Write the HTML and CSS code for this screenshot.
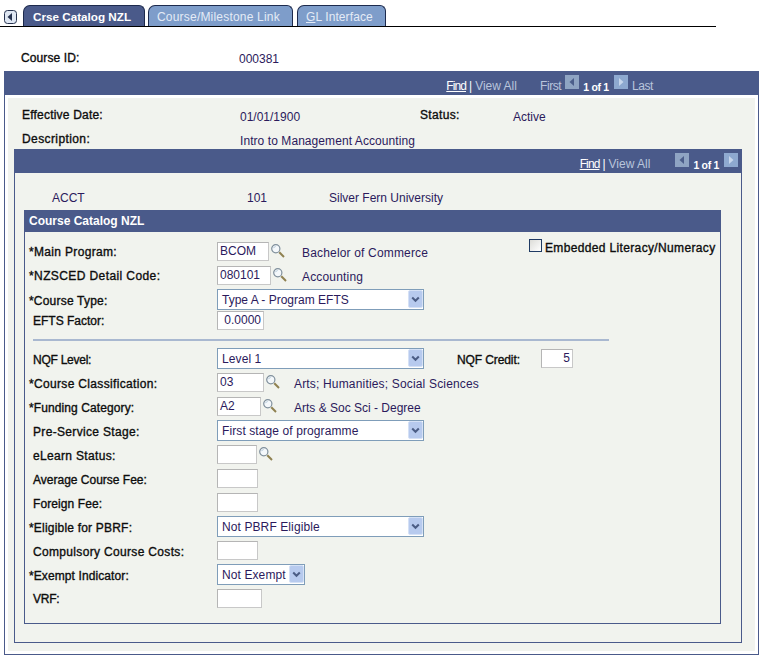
FILE: index.html
```html
<!DOCTYPE html>
<html lang="en">
<head>
<meta charset="utf-8">
<title>Crse Catalog NZL</title>
<link rel="stylesheet" href="styles.css">
</head>
<body>
<svg width="0" height="0" class="defs">
  <symbol id="mag" viewBox="0 0 14 14">
    <circle cx="4.800" cy="4.800" r="4.100" fill="#f4f8fb" stroke="#7f8f9c" stroke-width="1.200"/>
    <path d="M2.500 4.200a2.600 2.600 0 0 1 2.200-1.700" fill="none" stroke="#b6cbdc"/>
    <path d="M8.300 8.300 13 13" stroke="#8f8150" stroke-width="2"/>
  </symbol>
  <symbol id="drop" viewBox="0 0 15 18">
    <rect x=".5" y=".5" width="14" height="17" rx="1.500" fill="#b7caee" stroke="#d5e1f6"/>
    <path d="M4.200 7.500l3.300 3.300 3.300-3.300" fill="none" stroke="#4b5d85" stroke-width="2"/>
  </symbol>
  <symbol id="al" viewBox="0 0 14 14"><rect width="14" height="14" fill="#8fa4c3"/><path d="M9 3v8L4.500 7z" fill="#4c5e8b"/></symbol>
  <symbol id="ar" viewBox="0 0 14 14"><rect width="14" height="14" fill="#8ea9d0"/><path d="M5 3v8L9.500 7z" fill="#c7d6ec"/></symbol>
</svg>

<nav class="tabbar">
  <span class="collapse"><svg width="13" height="14" viewBox="0 0 13 14"><rect x=".5" y=".5" width="12" height="13" rx="3" fill="#dfe7f3" stroke="#26324f"/><path d="M8 3v8L3.500 7z" fill="#26324f"/></svg></span>
  <a class="tab active">Crse Catalog NZL</a>
  <a class="tab tab-mid">Course/Milestone Link</a>
  <a class="tab tab-last"><u>G</u>L Interface</a>
</nav>

<div class="course-id">
  <span class="label id-label t1">Course ID:</span>
  <span class="val">000381</span>
</div>

<section class="outer">
  <header class="bar">
    <a class="find">Find</a><span class="sep">|</span><span class="dim">View All</span>
    <span class="dim first">First</span>
    <svg class="arrow"><use href="#al"/></svg>
    <b class="count">1 of 1</b>
    <svg class="arrow"><use href="#ar"/></svg>
    <span class="dim last">Last</span>
  </header>
  <div class="outer-body">
    <div class="info-row first-info">
      <span class="label info-label t2">Effective Date:</span>
      <span class="val info-val">01/01/1900</span>
      <span class="label status-label t3">Status:</span>
      <span class="val">Active</span>
    </div>
    <div class="info-row second-info">
      <span class="label info-label t4">Description:</span>
      <span class="val info-val desc-text">Intro to Management Accounting</span>
    </div>

    <section class="inner">
      <header class="bar inner-bar">
        <a class="find">Find</a><span class="sep">|</span><span class="dim">View All</span>
        <svg class="arrow nav-first"><use href="#al"/></svg>
        <b class="count">1 of 1</b>
        <svg class="arrow"><use href="#ar"/></svg>
      </header>
      <div class="inner-body">
        <div class="key-row">
          <span class="val k1">ACCT</span>
          <span class="val k2">101</span>
          <span class="val">Silver Fern University</span>
        </div>
        <section class="catalog">
          <h2>Course Catalog NZL</h2>
          <div class="form">
            <span class="check"><i class="box"></i>Embedded Literacy/Numeracy</span>

            <div class="row"><label class="req t3 up">*Main Program:</label><span class="inp w52">BCOM</span><svg class="mag"><use href="#mag"/></svg><span class="val desc m17">Bachelor of Commerce</span></div>
            <div class="row"><label class="req t4 up">*NZSCED Detail Code:</label><span class="inp w54">080101</span><svg class="mag"><use href="#mag"/></svg><span class="val desc m15">Accounting</span></div>
            <div class="row"><label class="req t2">*Course Type:</label><span class="sel w207 tight">Type A - Program EFTS<svg class="dd"><use href="#drop"/></svg></span></div>
            <div class="row short"><label class="up">EFTS Factor:</label><span class="inp w47 right">0.0000</span></div>
            <hr class="rule">
            <div class="row"><label class="tn2">NQF Level:</label><span class="sel w207">Level 1<svg class="dd"><use href="#drop"/></svg></span><label class="credit tn1">NQF Credit:</label><span class="inp w32 right">5</span></div>
            <div class="row"><label class="req t3">*Course Classification:</label><span class="inp w47">03</span><svg class="mag"><use href="#mag"/></svg><span class="val desc m14">Arts; Humanities; Social Sciences</span></div>
            <div class="row"><label class="req t1">*Funding Category:</label><span class="inp w44">A2</span><svg class="mag"><use href="#mag"/></svg><span class="val desc m17 tight">Arts &amp; Soc Sci - Degree</span></div>
            <div class="row"><label class="t3">Pre-Service Stage:</label><span class="sel w207">First stage of programme<svg class="dd"><use href="#drop"/></svg></span></div>
            <div class="row"><label class="t3">eLearn Status:</label><span class="inp w40"></span><svg class="mag"><use href="#mag"/></svg></div>
            <div class="row"><label>Average Course Fee:</label><span class="inp w41"></span></div>
            <div class="row"><label class="t1">Foreign Fee:</label><span class="inp w41"></span></div>
            <div class="row"><label class="req t2">*Eligible for PBRF:</label><span class="sel w207">Not PBRF Eligible<svg class="dd"><use href="#drop"/></svg></span></div>
            <div class="row"><label class="t3">Compulsory Course Costs:</label><span class="inp w41"></span></div>
            <div class="row"><label class="req t1">*Exempt Indicator:</label><span class="sel w88">Not Exempt<svg class="dd"><use href="#drop"/></svg></span></div>
            <div class="row"><label class="tn2 up">VRF:</label><span class="inp w45"></span></div>
          </div>
        </section>
      </div>
    </section>
  </div>
</section>
</body>
</html>
```

FILE: styles.css
```css
* { box-sizing: border-box; }
html, body { margin: 0; padding: 0; background: #fff; }
body {
  width: 764px;
  height: 661px;
  overflow: hidden;
  font: 12px/14px "Liberation Sans", Arial, sans-serif;
  color: #000;
}
.defs { position: absolute; }

/* tabs */
.tabbar {
  display: flex;
  align-items: flex-end;
  width: 716px;
  height: 27px;
  padding: 5px 0 0 4px;
  border-bottom: 1px solid #000;
}
.collapse { display: flex; align-self: flex-start; margin: 5px 6px 0 0; }
.tab {
  display: flex;
  align-items: center;
  height: 21px;
  padding: 2px 0 0 8px;
  border: 1px solid #1d2a4d;
  border-bottom: 0;
  border-radius: 7px 6px 0 0;
  background: #7e9dca;
  color: #e4ebf6;
  white-space: nowrap;
}
.tab.active {
  width: 122px;
  margin-right: 3px;
  padding-left: 9px;
  background: #4a5a8a;
  color: #fff;
  font-size: 11.700px;
  font-weight: bold;
}
.tab-mid { width: 145px; margin-right: 4px; letter-spacing: .2px; }
.tab-last { width: 89px; letter-spacing: .1px; }

/* top line */
.course-id { display: flex; height: 44px; padding: 24px 0 0 21px; }
.id-label { width: 218px; }
.course-id .val { padding-top: 1px; }
.label, .row label, .check {
  color: #0d0d0d;
  -webkit-text-stroke: .35px #0d0d0d;
}
.t1 { letter-spacing: .1px; }
.t2 { letter-spacing: .2px; }
.t3 { letter-spacing: .33px; }
.t4 { letter-spacing: .4px; }
.tn1 { letter-spacing: -.1px; }
.tn2 { letter-spacing: -.25px; }
.val { color: #2b1a5c; }

/* outer level */
.outer {
  margin-left: 4px;
  width: 755px;
  height: 584px;
  border: 1px solid #4a5a8a;
  padding-bottom: 3px;
  display: flex;
  flex-direction: column;
}
.bar {
  display: flex;
  align-items: center;
  justify-content: flex-end;
  height: 23px;
  padding: 5px 105px 0 0;
  background: #4a5a8a;
  color: #fff;
  flex: none;
}
.inner-bar { padding-right: 3px; }
.find { color: #fff; text-decoration: underline; letter-spacing: -.9px; }
.sep { margin: 0 3px; }
.dim { color: #b9c5dc; }
.first { margin-left: 23px; margin-right: 4px; letter-spacing: -.4px; }
.last { margin-left: 4px; letter-spacing: -.4px; }
.arrow { width: 14px; height: 14px; margin-top: -8px; flex: none; }
.nav-first { margin-left: 25px; }
.count { margin: 2px 5px 0 4px; font-size: 10.500px; letter-spacing: -.3px; }
.outer-body {
  flex: 1;
  margin: 3px 3px 0 3px;
  background: #f1f3ee;
  padding: 9px 0 0 6px;
}
.info-row { display: flex; }
.first-info { height: 25px; padding-top: 1px; }
.second-info { height: 17px; }
.info-label { width: 226px; padding-left: 8px; }
.info-val { width: 180px; }
.desc-text { letter-spacing: .07px; white-space: nowrap; }
.info-row .val { padding-top: 2px; }
.status-label { width: 93px; }

/* inner level */
.inner {
  width: 728px;
  height: 494px;
  border: 1px solid #4a5a8a;
  display: flex;
  flex-direction: column;
}
.inner-body { flex: 1; padding: 0 0 0 9px; }
.key-row { display: flex; height: 37px; padding-top: 18px; }
.k1 { margin-left: 28px; width: 195px; }
.k2 { width: 82px; }

/* catalog */
.catalog {
  position: relative;
  width: 697px;
  height: 414px;
  border: 1px solid #4a5a8a;
}
.catalog h2 {
  margin: 0;
  height: 21px;
  padding-left: 4px;
  background: #4a5a8a;
  color: #fff;
  font-size: 12px;
  line-height: 21px;
  font-weight: bold;
}
.form { padding-top: 7px; }
.check {
  position: absolute;
  top: 30px;
  left: 504px;
  display: flex;
  align-items: center;
  white-space: nowrap;
  letter-spacing: .35px;
}
.box {
  width: 13px;
  height: 13px;
  margin: -5px 3px 0 0;
  border: 1px solid #1f3a63;
  background: linear-gradient(135deg, #dcdcd8, #fff);
  -webkit-text-stroke: 0;
}
.row { display: flex; align-items: center; height: 24px; padding-left: 8px; }
.short { height: 18px; }
.row label { width: 184px; padding-top: 3px; white-space: nowrap; }
.row label.up { padding-top: 1px; }
.row label.req { margin-left: -4px; width: 188px; }
.row label.credit { width: auto; margin: 0 21px 0 33px; }
.inp {
  display: block;
  height: 19px;
  padding: 0 2px;
  border: 1px solid #b5b5b5;
  border-right-color: #c8c8c8;
  border-bottom-color: #c8c8c8;
  background: #fff;
  color: #2b1a5c;
  line-height: 17px;
}
.right { text-align: right; }
.w52 { width: 52px; }
.w54 { width: 54px; }
.w47 { width: 47px; }
.w44 { width: 44px; }
.w40 { width: 40px; }
.w41 { width: 41px; }
.w45 { width: 45px; }
.w32 { width: 32px; }
.mag { width: 14px; height: 14px; margin: -1px 0 0 2px; flex: none; }
.desc { padding-top: 4px; letter-spacing: .17px; white-space: nowrap; }
.m14 { margin-left: 14px; }
.m15 { margin-left: 15px; }
.m17 { margin-left: 17px; }
.sel {
  position: relative;
  display: block;
  height: 21px;
  padding: 1px 0 0 4px;
  border: 1px solid #7f9db9;
  background: #fff;
  color: #2b1a5c;
  line-height: 18px;
  letter-spacing: .1px;
  white-space: nowrap;
}
.sel.tight, .desc.tight { letter-spacing: 0; }
.w207 { width: 207px; }
.w88 { width: 88px; }
.dd { position: absolute; top: 0; right: 0; width: 15px; height: 18px; }
.rule {
  width: 576px;
  height: 2px;
  margin: 10px 0 5px 8px;
  border: 0;
  background: #a9b8d0;
}
```
